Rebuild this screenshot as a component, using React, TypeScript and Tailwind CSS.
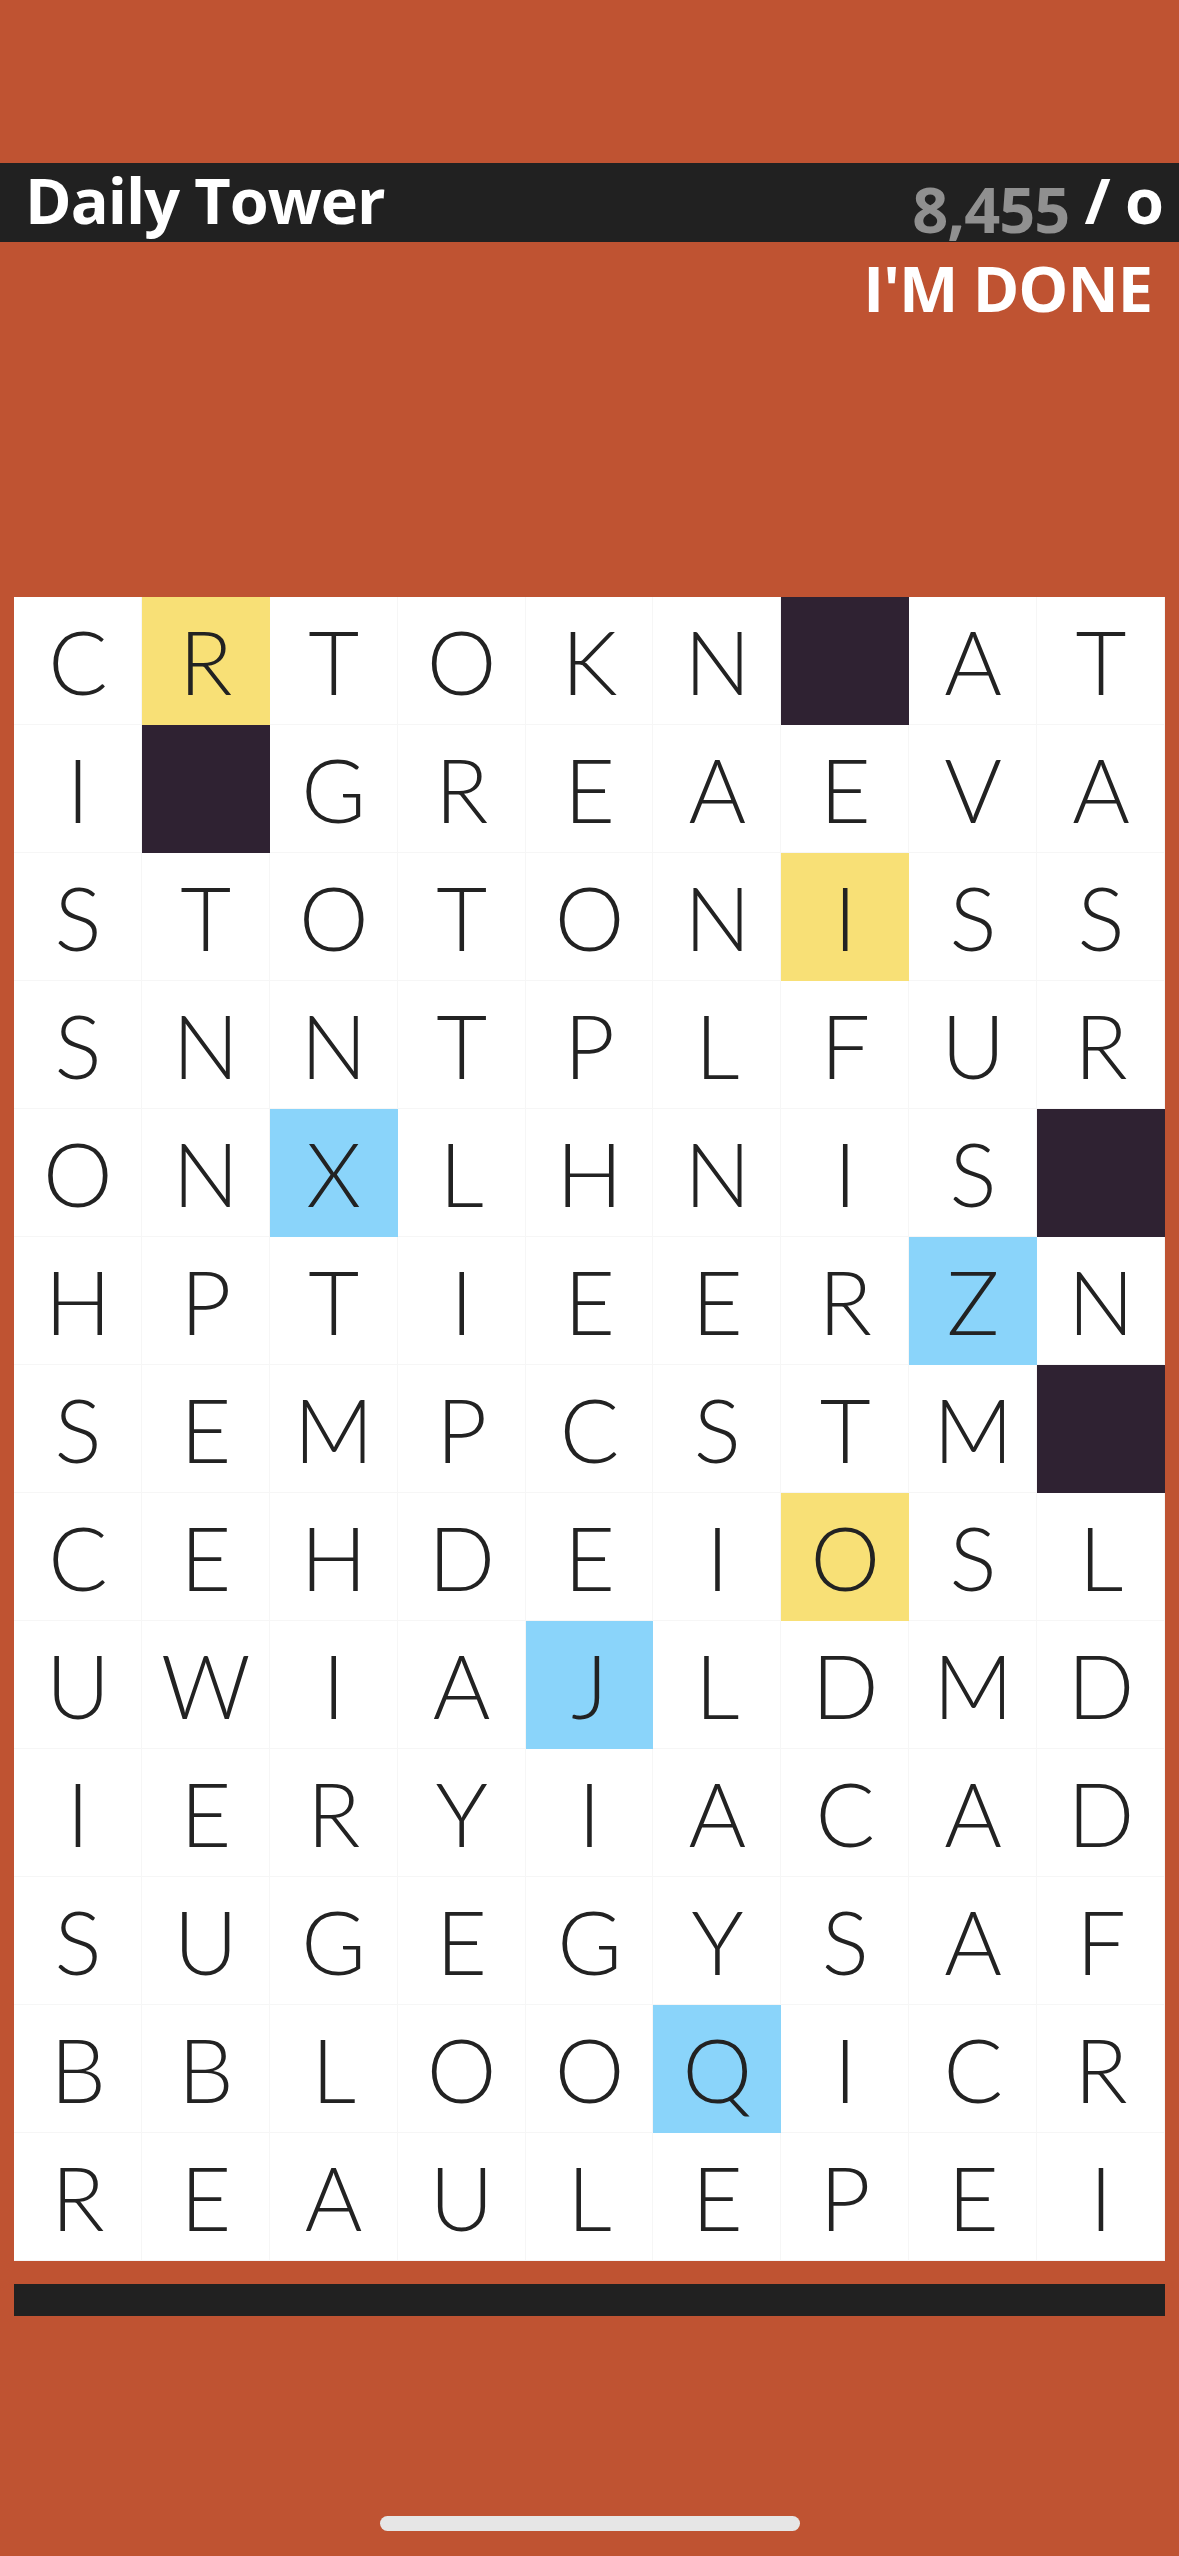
import React from 'react';

type Mark = 'none' | 'gold' | 'sky' | 'block';

/**
 * Board rows. '#' is a blocked cell, a lowercase letter is a gold tile,
 * a letter prefixed with '*' is a sky tile.
 */
const ROWS: string[][] = [
  ['C', 'r', 'T', 'O', 'K', 'N', '#', 'A', 'T'],
  ['I', '#', 'G', 'R', 'E', 'A', 'E', 'V', 'A'],
  ['S', 'T', 'O', 'T', 'O', 'N', 'i', 'S', 'S'],
  ['S', 'N', 'N', 'T', 'P', 'L', 'F', 'U', 'R'],
  ['O', 'N', '*X', 'L', 'H', 'N', 'I', 'S', '#'],
  ['H', 'P', 'T', 'I', 'E', 'E', 'R', '*Z', 'N'],
  ['S', 'E', 'M', 'P', 'C', 'S', 'T', 'M', '#'],
  ['C', 'E', 'H', 'D', 'E', 'I', 'o', 'S', 'L'],
  ['U', 'W', 'I', 'A', '*J', 'L', 'D', 'M', 'D'],
  ['I', 'E', 'R', 'Y', 'I', 'A', 'C', 'A', 'D'],
  ['S', 'U', 'G', 'E', 'G', 'Y', 'S', 'A', 'F'],
  ['B', 'B', 'L', 'O', 'O', '*Q', 'I', 'C', 'R'],
  ['R', 'E', 'A', 'U', 'L', 'E', 'P', 'E', 'I'],
];

const parseCell = (raw: string): { letter: string; mark: Mark } => {
  if (raw === '#') return { letter: '', mark: 'block' };
  if (raw.startsWith('*')) return { letter: raw.slice(1), mark: 'sky' };
  if (raw !== raw.toUpperCase()) return { letter: raw.toUpperCase(), mark: 'gold' };
  return { letter: raw, mark: 'none' };
};

const markClass: Record<Mark, string> = {
  none: 'bg-white shadow-[inset_-1px_-1px_0_#f6f6f6]',
  gold: 'bg-[#f8e076]',
  sky: 'bg-[#8ad4fa]',
  block: 'bg-[#2f2232]',
};

const Tile: React.FC<{ raw: string }> = ({ raw }) => {
  const { letter, mark } = parseCell(raw);
  return (
    <div
      className={`flex h-[128px] items-center justify-center text-[88px] font-light leading-none text-[#222222] ${markClass[mark]}`}
    >
      {letter}
    </div>
  );
};

export default function App() {
  return (
    <div className="flex min-h-[2556px] w-full flex-col bg-[#bf5332] font-['Open_Sans',sans-serif]">
      {/* Status bar area */}
      <div className="h-[163px]" />

      {/* Title bar */}
      <header className="flex h-[79px] items-start justify-between bg-[#212121] pl-[25px] pr-[16px] pt-[5px] text-[63px] font-bold leading-none tracking-[-1px] text-white">
        <h1 className="leading-[64px]">Daily Tower</h1>
        <div className="leading-[64px] whitespace-nowrap">
          <span className="align-[-9px] text-[#909090]">8,455</span> / o
        </div>
      </header>

      {/* Done action */}
      <div className="flex justify-end pr-[27px] pt-[14px]">
        <button className="text-[63px] font-bold leading-[64px] tracking-[-1px] text-white">I'M DONE</button>
      </div>

      {/* Board */}
      <main className="mx-[14px] mt-[277px] grid grid-cols-9 font-['Lato',sans-serif]">
        {ROWS.map((row, r) => row.map((raw, c) => <Tile key={`${r}-${c}`} raw={raw} />))}
      </main>

      {/* Progress track */}
      <div className="mx-[14px] mt-[23px] h-[32px] bg-[#212121]" />

      {/* Home indicator */}
      <div className="mt-[200px] flex justify-center">
        <div className="h-[15px] w-[420px] rounded-full bg-[#e6e6e6]" />
      </div>
    </div>
  );
}
